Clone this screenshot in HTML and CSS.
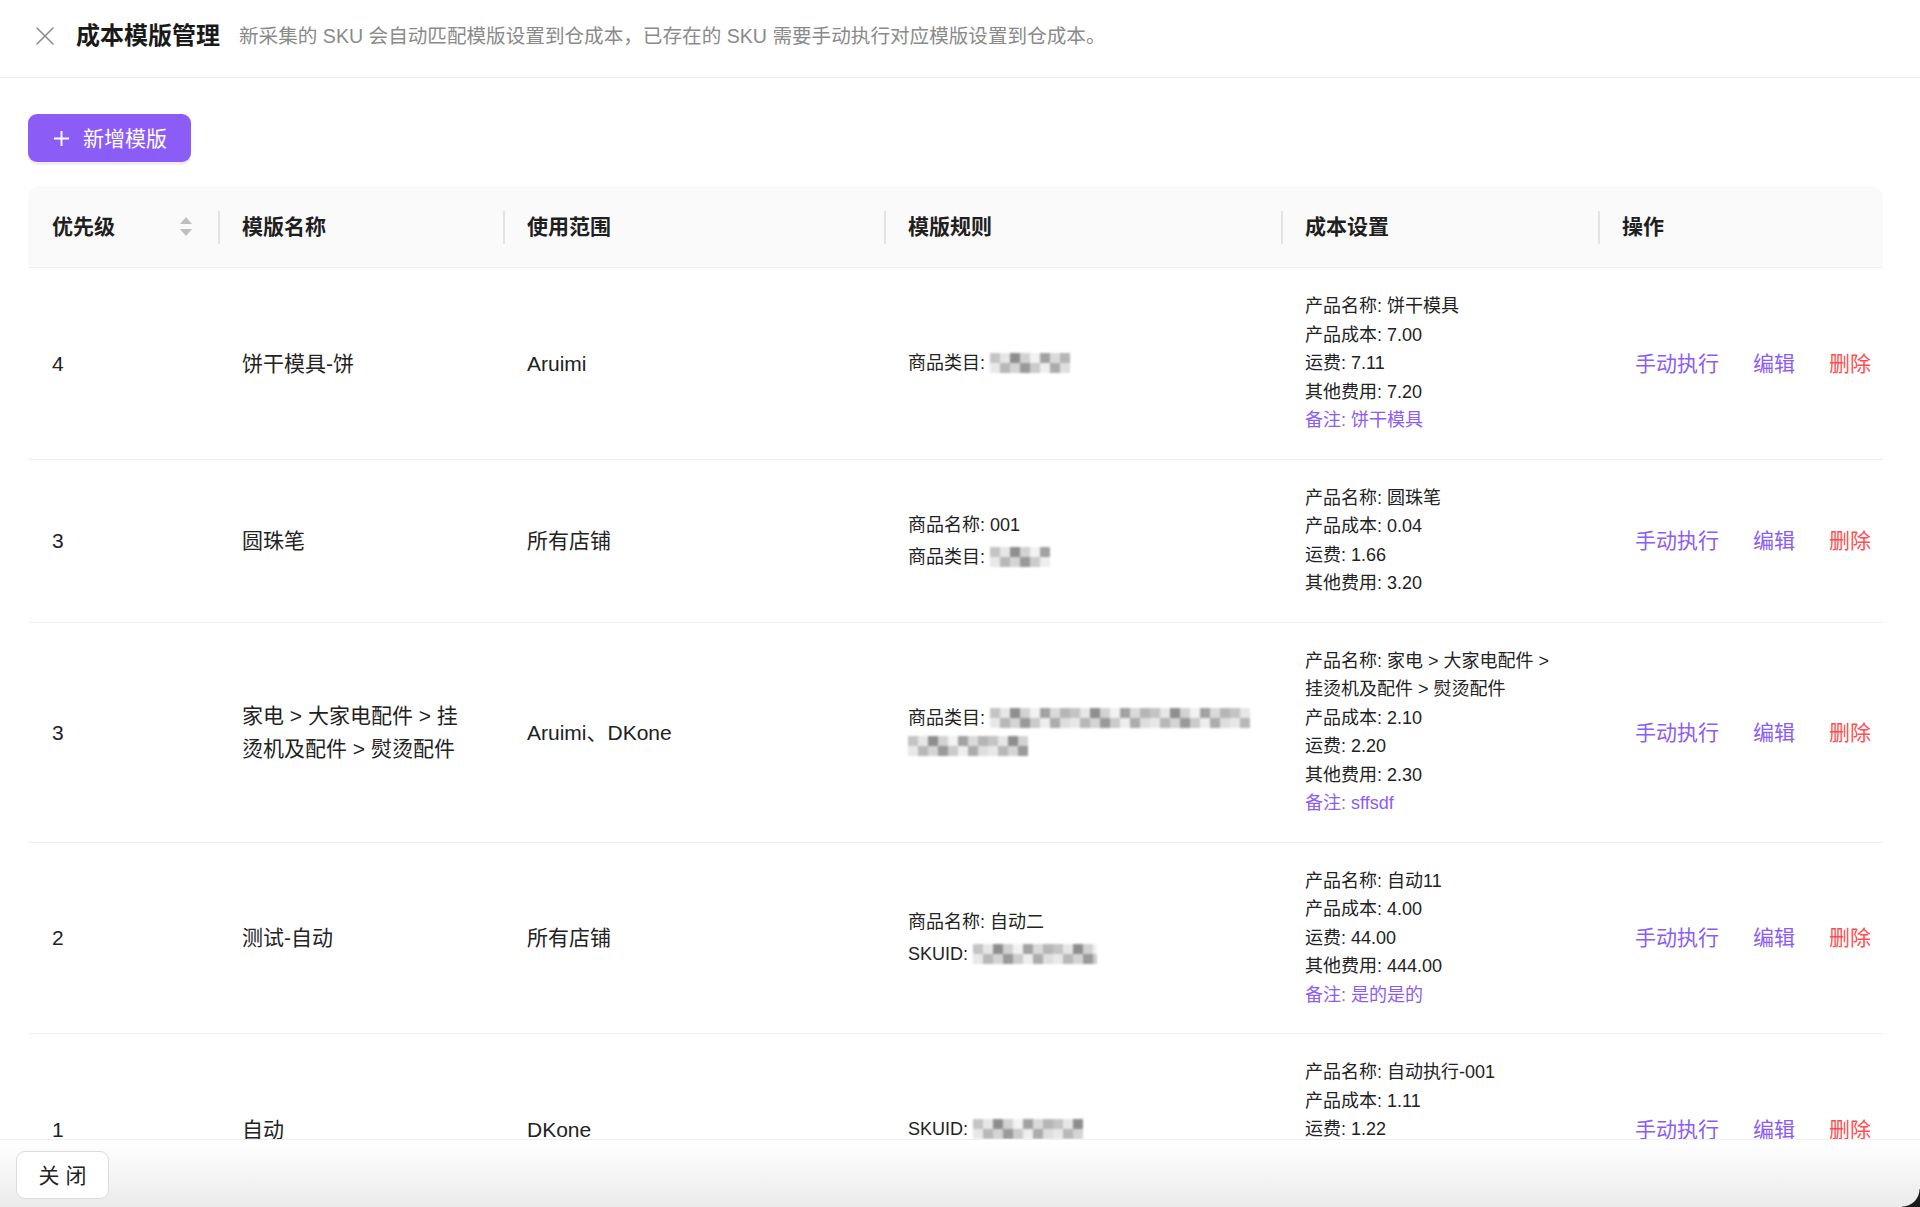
FILE: index.html
```html
<!DOCTYPE html>
<html lang="zh-CN">
<head>
<meta charset="utf-8">
<title>成本模版管理</title>
<link rel="stylesheet" href="styles.css">
</head>
<body>
<div class="page">
  <header class="topbar">
    <svg class="close-icon" viewBox="0 0 20 20" aria-hidden="true"><path d="M2 2 L18 18 M18 2 L2 18" stroke="#8c8c8c" stroke-width="1.6" fill="none" stroke-linecap="round"/></svg>
    <h1 class="title">成本模版管理</h1>
    <p class="subtitle">新采集的 SKU 会自动匹配模版设置到仓成本，已存在的 SKU 需要手动执行对应模版设置到仓成本。</p>
  </header>

  <main class="content">
    <button class="btn-primary" type="button">
      <svg class="plus" viewBox="0 0 18 18" aria-hidden="true"><path d="M9 1 V17 M1 9 H17" stroke="#fff" stroke-width="2" fill="none"/></svg>
      <span>新增模版</span>
    </button>

    <table class="tbl">
      <colgroup>
        <col class="c1"><col class="c2"><col class="c3"><col class="c4"><col class="c5"><col class="c6">
      </colgroup>
      <thead>
        <tr>
          <th><div class="th-sort"><span>优先级</span>
            <span class="sorter"><svg viewBox="0 0 12 7"><path d="M6 0 L12 7 H0 Z" fill="#bfbfbf"/></svg><svg viewBox="0 0 12 7"><path d="M0 0 H12 L6 7 Z" fill="#bfbfbf"/></svg></span></div></th>
          <th class="sep">模版名称</th>
          <th class="sep">使用范围</th>
          <th class="sep">模版规则</th>
          <th class="sep">成本设置</th>
          <th class="sep">操作</th>
        </tr>
      </thead>
      <tbody>
        <tr>
          <td>4</td>
          <td>饼干模具-饼</td>
          <td>Aruimi</td>
          <td><div class="rules"><div>商品类目: <span class="mosaic m80"></span></div></div></td>
          <td><div class="cost">
            <div>产品名称: 饼干模具</div><div>产品成本: 7.00</div><div>运费: 7.11</div><div>其他费用: 7.20</div><div class="note">备注: 饼干模具</div>
          </div></td>
          <td><div class="actions"><a class="link">手动执行</a><a class="link">编辑</a><a class="link danger">删除</a></div></td>
        </tr>
        <tr>
          <td>3</td>
          <td>圆珠笔</td>
          <td>所有店铺</td>
          <td><div class="rules"><div>商品名称: 001</div><div>商品类目: <span class="mosaic m60"></span></div></div></td>
          <td><div class="cost">
            <div>产品名称: 圆珠笔</div><div>产品成本: 0.04</div><div>运费: 1.66</div><div>其他费用: 3.20</div>
          </div></td>
          <td><div class="actions"><a class="link">手动执行</a><a class="link">编辑</a><a class="link danger">删除</a></div></td>
        </tr>
        <tr>
          <td>3</td>
          <td>家电 &gt; 大家电配件 &gt; 挂<br>烫机及配件 &gt; 熨烫配件</td>
          <td>Aruimi、DKone</td>
          <td><div class="rules"><div>商品类目: <span class="mosaic m260"></span><br><span class="mosaic m120"></span></div></div></td>
          <td><div class="cost">
            <div>产品名称: 家电 &gt; 大家电配件 &gt;<br>挂烫机及配件 &gt; 熨烫配件</div><div>产品成本: 2.10</div><div>运费: 2.20</div><div>其他费用: 2.30</div><div class="note">备注: sffsdf</div>
          </div></td>
          <td><div class="actions"><a class="link">手动执行</a><a class="link">编辑</a><a class="link danger">删除</a></div></td>
        </tr>
        <tr>
          <td>2</td>
          <td>测试-自动</td>
          <td>所有店铺</td>
          <td><div class="rules"><div>商品名称: 自动二</div><div>SKUID: <span class="mosaic m124"></span></div></div></td>
          <td><div class="cost">
            <div>产品名称: 自动11</div><div>产品成本: 4.00</div><div>运费: 44.00</div><div>其他费用: 444.00</div><div class="note">备注: 是的是的</div>
          </div></td>
          <td><div class="actions"><a class="link">手动执行</a><a class="link">编辑</a><a class="link danger">删除</a></div></td>
        </tr>
        <tr>
          <td>1</td>
          <td>自动</td>
          <td>DKone</td>
          <td><div class="rules"><div>SKUID: <span class="mosaic m110"></span></div></div></td>
          <td><div class="cost">
            <div>产品名称: 自动执行-001</div><div>产品成本: 1.11</div><div>运费: 1.22</div><div>其他费用: 1.33</div><div class="note">备注: 自动执行</div>
          </div></td>
          <td><div class="actions"><a class="link">手动执行</a><a class="link">编辑</a><a class="link danger">删除</a></div></td>
        </tr>
      </tbody>
    </table>
  </main>

  <footer class="footer">
    <button class="btn-default" type="button">关 闭</button>
  </footer>
  <div class="corner"></div>
</div>
</body>
</html>
```

FILE: styles.css
```css
* { box-sizing: border-box; }
html, body { margin: 0; padding: 0; }
body {
  font-family: "Liberation Sans", "Noto Sans CJK SC", sans-serif;
  color: #222;
  background: #fff;
}
.page {
  position: relative;
  height: 1207px;
  display: flex;
  flex-direction: column;
  overflow: hidden;
}

/* top bar */
.topbar {
  flex: none;
  height: 78px;
  border-bottom: 1px solid #f0f0f0;
  display: flex;
  align-items: center;
  padding: 0 0 6px 35px;
}
.close-icon { width: 20px; height: 20px; flex: none; }
.title {
  margin: 0 0 0 21px;
  font-size: 24px;
  font-weight: 700;
  line-height: 30px;
  color: #1a1a1a;
}
.subtitle {
  margin: 0 0 0 19px;
  font-size: 19.6px;
  line-height: 30px;
  color: #8a8a8a;
}

/* content */
.content {
  flex: 1;
  min-height: 0;
  overflow: hidden;
  padding: 36px 37px 0 28px;
}
.btn-primary {
  display: inline-flex;
  align-items: center;
  gap: 13px;
  height: 48px;
  padding: 0 24px 0 25px;
  background: #8b5cf6;
  color: #fff;
  border: none;
  border-radius: 9px;
  font-family: inherit;
  font-size: 21px;
  line-height: 33px;
  box-shadow: 0 3px 0 rgba(139, 92, 246, 0.12);
}
.plus { width: 17px; height: 17px; }

/* table */
.tbl {
  margin-top: 24px;
  width: 100%;
  border-collapse: separate;
  border-spacing: 0;
  table-layout: fixed;
  font-size: 21px;
  line-height: 33px;
}
.c1 { width: 190px; }
.c2 { width: 285px; }
.c3 { width: 381px; }
.c4 { width: 397px; }
.c5 { width: 317px; }
.c6 { width: 285px; }

.tbl th {
  position: relative;
  background: #fafafa;
  padding: 24px;
  text-align: left;
  font-weight: 700;
  color: #1f1f1f;
  border-bottom: 1px solid #f0f0f0;
}
.tbl th:first-child { border-top-left-radius: 12px; }
.tbl th:last-child { border-top-right-radius: 12px; }
.tbl th.sep::before {
  content: "";
  position: absolute;
  left: 0;
  top: 50%;
  width: 1.5px;
  height: 33px;
  margin-top: -16px;
  background: #e3e3e3;
}
.th-sort { display: flex; align-items: center; justify-content: space-between; padding-right: 2px; }
.sorter { display: flex; flex-direction: column; gap: 5px; }
.sorter svg { width: 12px; height: 7px; display: block; }

.tbl td {
  padding: 24px;
  vertical-align: middle;
  border-bottom: 1px solid #f0f0f0;
  color: #222;
}

.rules {
  display: flex;
  flex-direction: column;
  gap: 4px;
  font-size: 18px;
  line-height: 28px;
}
.cost {
  font-size: 18px;
  line-height: 28.5px;
}
.note { color: #8b5cf6; }

.mosaic {
  display: inline-block;
  vertical-align: -4px;
  height: 20px;
  background:
    repeating-linear-gradient(90deg, #c4c4c4 0 10px, #e6e6e6 10px 20px, #8e8e8e 20px 30px, #d2d2d2 30px 40px, #f2f2f2 40px 50px, #a2a2a2 50px 60px, #dadada 60px 70px, #b6b6b6 70px 80px) 0 0 / 100% 50% no-repeat,
    repeating-linear-gradient(90deg, #e8e8e8 0 10px, #b8b8b8 10px 20px, #d4d4d4 20px 30px, #9a9a9a 30px 40px, #cbcbcb 40px 50px, #eeeeee 50px 60px, #acacac 60px 70px, #dedede 70px 80px) 0 100% / 100% 50% no-repeat;
  filter: blur(0.8px);
}
.m80 { width: 80px; }
.m60 { width: 60px; }
.m260 { width: 260px; }
.m120 { width: 120px; }
.m124 { width: 124px; }
.m110 { width: 110px; }

.actions {
  display: flex;
  gap: 8px;
  white-space: nowrap;
}
.link {
  padding: 0 13px;
  color: #8b5cf6;
  cursor: pointer;
}
.link.danger { color: #ff4d4f; }

/* footer */
.footer {
  flex: none;
  height: 68px;
  border-top: 1px solid #efefef;
  padding: 11px 16px 8px;
  background: linear-gradient(180deg, #ffffff 0%, #f3f3f3 60%, #ebebeb 100%);
}
.btn-default {
  height: 48px;
  width: 93px;
  padding: 0;
  border: 1px solid #dcdcdc;
  border-radius: 9px;
  background: #fff;
  font-family: inherit;
  font-size: 21px;
  line-height: 33px;
  color: #222;
}

.corner {
  position: absolute;
  right: 0;
  bottom: 0;
  width: 18px;
  height: 18px;
  background: radial-gradient(circle at 0 0, rgba(0,0,0,0) 17px, #1a1a1a 18px);
}
```
